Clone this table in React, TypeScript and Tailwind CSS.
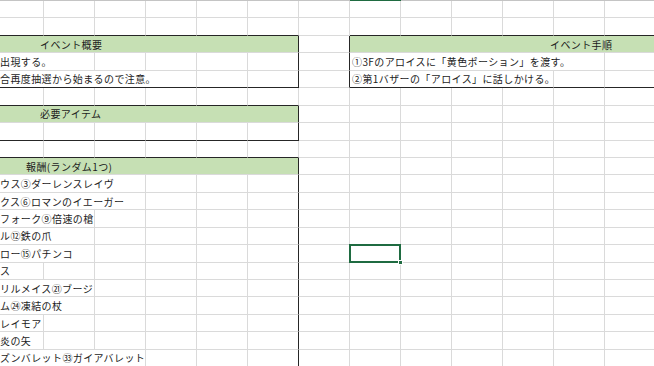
import React from 'react';

type Cell = {
  span?: number;
  text?: string;
  head?: boolean;
  pl?: string;
  darkR?: boolean;
  darkB?: boolean;
  sel?: boolean;
};

const spanClass: Record<number, string> = {
  1: 'col-span-1',
  2: 'col-span-2',
  3: 'col-span-3',
  4: 'col-span-4',
  5: 'col-span-5',
  6: 'col-span-6',
};

const blank = (n: number, extra: Partial<Cell> = {}): Cell[] =>
  Array.from({ length: n }, () => ({ ...extra }));

// left-side blocks occupy columns 0..5, the right block 7..12
const leftRow = (text: string, span: number): Cell[] => [
  { span, text },
  ...blank(5 - span),
  { darkR: true },
  ...blank(7),
];

const rows: Cell[][] = [
  blank(13),
  [...blank(6, { darkB: true }), {}, ...blank(6, { darkB: true })],
  [
    { span: 6, head: true, text: 'イベント概要', pl: 'pl-[40px]', darkR: true },
    { darkR: true },
    { span: 6, head: true, text: 'イベント手順', pl: 'pl-[200px]' },
  ],
  [
    { span: 2, text: '出現する。' },
    ...blank(3),
    { darkR: true },
    { darkR: true },
    { span: 5, text: '①3Fのアロイスに「黄色ポーション」を渡す。', pl: 'pl-[2px]' },
    {},
  ],
  [
    { span: 4, text: '合再度抽選から始まるので注意。', darkB: true },
    { darkB: true },
    { darkR: true, darkB: true },
    { darkR: true },
    { span: 4, text: '②第1バザーの「アロイス」に話しかける。', pl: 'pl-[2px]', darkB: true },
    ...blank(2, { darkB: true }),
  ],
  [...blank(6, { darkB: true }), ...blank(7)],
  [{ span: 6, head: true, text: '必要アイテム', pl: 'pl-[40px]', darkR: true }, ...blank(7)],
  [...blank(5, { darkB: true }), { darkR: true, darkB: true }, ...blank(7)],
  [...blank(6, { darkB: true }), ...blank(7)],
  [{ span: 6, head: true, text: '報酬(ランダム1つ)', pl: 'pl-[26px]', darkR: true }, ...blank(7)],
  leftRow('ウス③ダーレンスレイヴ', 3),
  leftRow('クス⑥ロマンのイエーガー', 3),
  leftRow('フォーク⑨倍速の槍', 2),
  leftRow('ル⑫鉄の爪', 2),
  [{ span: 2, text: 'ロー⑮パチンコ' }, ...blank(3), { darkR: true }, {}, { sel: true }, ...blank(5)],
  leftRow('ス', 1),
  leftRow('リルメイス㉑ブージ', 2),
  leftRow('ム㉔凍結の杖', 2),
  leftRow('レイモア', 1),
  leftRow('炎の矢', 1),
  leftRow('ズンバレット㉝ガイアバレット', 3),
];

function SheetCell({ cell }: { cell: Cell }) {
  const { span = 1, text, head, pl = 'pl-0', darkR, darkB, sel } = cell;
  return (
    <div
      className={[
        spanClass[span],
        'relative flex items-center overflow-hidden whitespace-nowrap border-r border-b',
        darkR ? 'border-r-[#262626]' : 'border-r-[#dadada]',
        darkB ? 'border-b-[#262626]' : 'border-b-[#dadada]',
        head ? 'bg-[#c6e0b4]' : 'bg-white',
        pl,
        sel ? 'overflow-visible z-10' : '',
      ].join(' ')}
    >
      {text && (
        <span className="pt-px text-[10px] leading-[16px] tracking-[0.4px] text-[#1c1c1c]">{text}</span>
      )}
      {sel && (
        <>
          <div className="absolute -left-px -top-px right-[-1px] bottom-[-1px] border-2 border-[#1f6b41]" />
          <div className="absolute -right-[3px] -bottom-[3px] h-[5px] w-[5px] border border-white bg-[#1f6b41]" />
        </>
      )}
    </div>
  );
}

export default function App() {
  return (
    <div className="h-[366px] w-[654px] overflow-hidden bg-white font-['Noto_Sans_CJK_JP','Noto_Sans',sans-serif]">
      {/* column header edge, active column marked */}
      <div className="grid h-px grid-cols-[44px_repeat(12,51px)] bg-[#c4c4c4]">
        <div className="col-span-7" />
        <div className="bg-[#1f6b41]" />
      </div>
      {rows.map((row, i) => (
        <div key={i} className="grid h-[17.45px] grid-cols-[44px_repeat(12,51px)]">
          {row.map((cell, j) => (
            <SheetCell key={j} cell={cell} />
          ))}
        </div>
      ))}
    </div>
  );
}
